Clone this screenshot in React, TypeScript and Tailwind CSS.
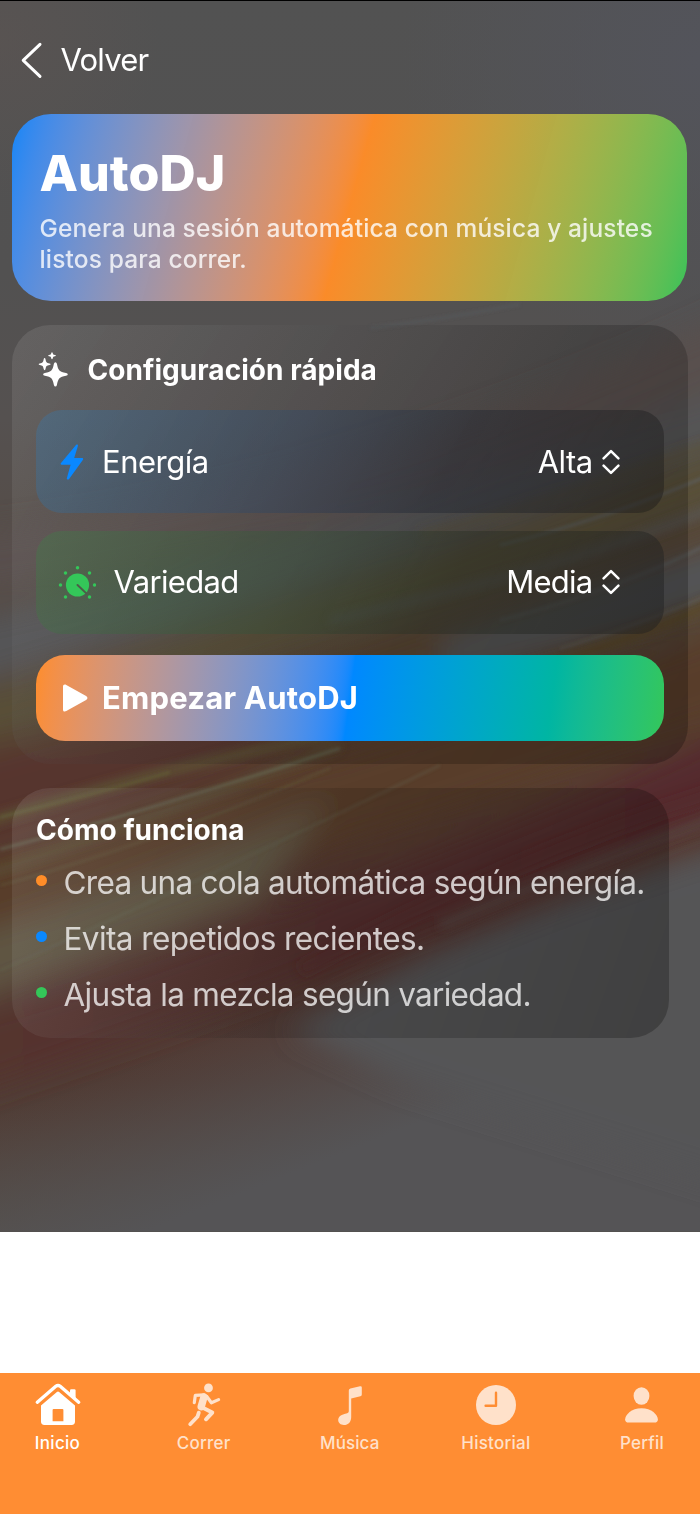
import type { ReactNode } from "react";

function Backdrop() {
  return (
    <svg
      className="absolute inset-0 h-full w-full"
      viewBox="0 0 700 1231"
      preserveAspectRatio="none"
      aria-hidden="true"
    >
      <defs>
        <linearGradient id="base" x1="0" y1="0" x2="0" y2="1">
          <stop offset="0" stopColor="#525252" />
          <stop offset="0.22" stopColor="#525151" />
          <stop offset="0.34" stopColor="#555150" />
          <stop offset="0.5" stopColor="#554a43" />
          <stop offset="0.6" stopColor="#563f30" />
          <stop offset="0.75" stopColor="#543630" />
          <stop offset="0.88" stopColor="#503b34" />
          <stop offset="1" stopColor="#534a43" />
        </linearGradient>
        <linearGradient id="crimson" x1="0" y1="0" x2="1" y2="0">
          <stop offset="0" stopColor="#55352e" />
          <stop offset="0.4" stopColor="#52302d" />
          <stop offset="1" stopColor="#552b2d" />
        </linearGradient>
        <radialGradient id="sky" gradientUnits="userSpaceOnUse" cx="700" cy="60" r="300">
          <stop offset="0" stopColor="#53545b" />
          <stop offset="1" stopColor="#53545b" stopOpacity="0" />
        </radialGradient>
        <radialGradient id="edge" gradientUnits="userSpaceOnUse" cx="0" cy="40" r="160">
          <stop offset="0" stopColor="#5b5452" />
          <stop offset="1" stopColor="#5b5452" stopOpacity="0" />
        </radialGradient>
        <linearGradient id="dusk" gradientUnits="userSpaceOnUse" x1="0" y1="1110" x2="62" y2="1265">
          <stop offset="0" stopColor="#555456" stopOpacity="0" />
          <stop offset="1" stopColor="#555456" />
        </linearGradient>
        <filter id="b14" x="-20%" y="-20%" width="140%" height="140%">
          <feGaussianBlur stdDeviation="14" />
        </filter>
        <filter id="b6" x="-20%" y="-20%" width="140%" height="140%">
          <feGaussianBlur stdDeviation="5" />
        </filter>
        <filter id="b1" x="-20%" y="-20%" width="140%" height="140%">
          <feGaussianBlur stdDeviation="1.5" />
        </filter>
      </defs>
      <rect width="700" height="1231" fill="url(#base)" />
      <rect width="700" height="400" fill="url(#sky)" />
      <rect width="700" height="400" fill="url(#edge)" opacity="0.7" />
      <g filter="url(#b14)">
        <path d="M-80 540Q350 500 780 290V360Q380 540 -80 600Z" fill="#58504d" />
        <path d="M-80 630Q380 530 780 370V420Q380 570 -80 700Z" fill="#555557" />
        <path d="M-80 710Q380 590 780 420V480Q400 630 -80 755Z" fill="#594f38" />
        <path d="M-80 765Q350 660 780 490V610Q400 700 -80 810Z" fill="#574433" />
        <path d="M-80 765Q200 720 340 690L320 740Q150 800 -80 860Z" fill="#56352e" />
        <path d="M440 640L780 525V575Q600 640 440 675Z" fill="#535456" />
        <path d="M-80 870Q350 760 780 610V700Q380 840 -80 970Z" fill="#583e2c" />
        <path d="M-80 1030Q350 900 780 705V790Q380 960 -80 1110Z" fill="url(#crimson)" />
        <path d="M-80 950Q150 880 330 800L260 900Q120 950 -80 1020Z" fill="#5e5443" />
      </g>
      <rect y="820" width="700" height="411" fill="url(#dusk)" />
      <g filter="url(#b14)">
        <path d="M780 830Q560 895 420 960L290 1030L400 1080L780 1200Z" fill="#555456" />
      </g>
      <g filter="url(#b6)" fill="none">
        <path d="M720 817Q560 872 440 925" stroke="#5a5a56" strokeWidth="7" opacity="0.5" />
        <path d="M720 505Q560 570 330 620" stroke="#575759" strokeWidth="7" opacity="0.8" />
        <path d="M720 440Q560 500 420 535" stroke="#5c5438" strokeWidth="12" opacity="0.4" />
        <path d="M-20 824Q150 770 330 735" stroke="#5f5c35" strokeWidth="9" opacity="0.75" />
        <path d="M-20 877Q200 800 340 745" stroke="#5e5b3a" strokeWidth="7" opacity="0.6" />
        <path d="M720 600Q600 655 480 680" stroke="#5a4728" strokeWidth="12" opacity="0.8" />
        <path d="M720 790Q500 860 300 970" stroke="#55282a" strokeWidth="16" opacity="0.35" />
      </g>
      <g filter="url(#b1)" fill="none">
        <path d="M0 849Q150 810 340 748" stroke="#69705a" strokeWidth="2.5" opacity="0.65" />
        <path d="M0 817Q90 795 170 772" stroke="#6a703d" strokeWidth="3" opacity="0.4" />
        <path d="M0 970Q200 880 440 765" stroke="#67715c" strokeWidth="2" opacity="0.35" />
        <path d="M0 885Q150 845 330 768" stroke="#687047" strokeWidth="2" opacity="0.35" />
        <path d="M720 470Q620 515 500 545" stroke="#5d6266" strokeWidth="3.5" opacity="0.6" />
        <path d="M720 538Q620 590 500 620" stroke="#5d6264" strokeWidth="4" opacity="0.5" />
        <path d="M720 590Q640 625 560 648" stroke="#62605a" strokeWidth="3" opacity="0.5" />
        <path d="M370 328Q450 318 520 304" stroke="#5a6062" strokeWidth="4" opacity="0.3" />
      </g>
    </svg>
  );
}

function ChevronUpDown() {
  return (
    <svg
      width="18"
      height="26"
      viewBox="0 0 18 26"
      fill="none"
      stroke="#fff"
      strokeWidth="2.5"
      strokeLinecap="round"
      strokeLinejoin="round"
    >
      <path d="M1.6 9.3L9 2.1L16.4 9.3M1.6 16.7L9 23.9L16.4 16.7" />
    </svg>
  );
}

function DialIcon() {
  const dots = [
    [18, 1.8], [30, 7], [6, 7], [35, 19], [1, 19], [30, 31], [6, 31],
  ];
  return (
    <svg className="mt-[6px]" width="38" height="38" viewBox="-1.5 0 38 38">
      <circle cx="18" cy="19" r="11.6" fill="#34c759" />
      <path d="M18 19L26.8 27.4" stroke="#4d5d49" strokeWidth="2" strokeLinecap="round" />
      {dots.map(([x, y]) => (
        <circle key={`${x}-${y}`} cx={x} cy={y} r="1.75" fill="#34c759" />
      ))}
    </svg>
  );
}

function SettingRow({
  icon,
  label,
  value,
  className,
  labelClass,
  valueClass,
}: {
  icon: ReactNode;
  label: string;
  value: string;
  className: string;
  labelClass: string;
  valueClass: string;
}) {
  return (
    <div className={`flex h-[103px] items-center rounded-[26px] pr-[44px] ${className}`}>
      {icon}
      <span className={`text-[31px] leading-[40px] ${labelClass}`}>{label}</span>
      <span className={`ml-auto mr-[9px] text-[31px] leading-[40px] ${valueClass}`}>{value}</span>
      <ChevronUpDown />
    </div>
  );
}

function Bullet({ dot, text, className }: { dot: string; text: string; className: string }) {
  return (
    <li className="flex h-[56px] items-center">
      <span className={`-mt-[4px] mr-[16.5px] size-[11px] shrink-0 rounded-full ${dot}`} />
      <span className={`whitespace-nowrap pt-px text-[31.5px] leading-[40px] text-white/75 ${className}`}>
        {text}
      </span>
    </li>
  );
}

function Tab({
  label,
  active = false,
  className,
  children,
}: {
  label: string;
  active?: boolean;
  className: string;
  children: ReactNode;
}) {
  return (
    <div className={`flex w-[115px] flex-col items-center ${active ? "text-white" : "text-[#ffe1ca]"}`}>
      <svg width="48" height="48" viewBox="0 0 48 48" fill="currentColor">
        {children}
      </svg>
      <span className={`mt-[3px] whitespace-nowrap text-[17px] font-medium leading-[22px] ${className}`}>
        {label}
      </span>
    </div>
  );
}

export default function App() {
  return (
    <div className="flex h-[1514px] w-[700px] flex-col overflow-hidden bg-white font-['Inter',sans-serif] text-white">
      <main className="relative h-[1231.5px] shrink-0 bg-[#525252]">
        <Backdrop />
        <div className="relative flex flex-col px-[12px]">
          <header className="-mx-[12px] h-[114.4px] border-t border-black pl-[20px] pt-[37px]">
            <div className="flex h-[44px] items-center">
              <svg width="24" height="38" viewBox="0 0 24 38" fill="none">
                <path
                  d="M20 3.3L3.2 19.3L20 35.4"
                  stroke="#fff"
                  strokeWidth="3"
                  strokeLinecap="round"
                  strokeLinejoin="round"
                />
              </svg>
              <span className="ml-[16.5px] text-[31px] leading-[40px] tracking-[-0.8px]">Volver</span>
            </div>
          </header>

          <section className="h-[186.8px] w-[675px] rounded-[39px] bg-[linear-gradient(105.5deg_in_oklab,#0088fff5,#ff8d28f8_50%,#34c759f5)] pl-[27.5px] pt-[29.7px]">
            <h1 className="text-[50px] font-extrabold leading-[58px] tracking-[0.05px]">AutoDJ</h1>
            <p className="mt-[11.4px] whitespace-nowrap text-[24.5px] font-medium leading-[30.5px] text-white/80">
              <span className="block tracking-[0.14px]">
                Genera una sesión automática con música y ajustes
              </span>
              <span className="block tracking-[0.14px]">listos para correr.</span>
            </p>
          </section>

          <section className="mt-[24px] flex h-[439.3px] w-[675.5px] flex-col rounded-[38px] bg-[linear-gradient(123deg,rgba(255,255,255,0.1),rgba(0,0,0,0.16)_60%,rgba(0,0,0,0.24))] px-[24px]">
            <div className="flex h-[85px] items-center pl-[1px] pt-[5px]">
              <svg width="32" height="38" viewBox="37 351 32 38" fill="#fff">
                <path d="M55.4 362.2Q56.5 362.2 56.9 363.8C58.2 370.6 59.4 371.9 66 373.1Q67.8 373.5 67.8 374.4T66 375.7C59.4 376.9 58.2 378.2 56.9 385Q56.5 386.6 55.4 386.6T53.9 385C52.6 378.2 51.4 376.9 44.9 375.7Q43.1 375.3 43.1 374.4T44.9 373.1C51.4 371.9 52.6 370.6 53.9 363.8Q54.3 362.2 55.4 362.2Z" />
                <path d="M44.6 358Q45.3 358 45.5 359.2C46.1 362.3 46.6 362.9 49.5 363.4Q50.6 363.6 50.6 364.2T49.5 365C46.6 365.5 46.1 366.1 45.5 369.1Q45.3 370.2 44.6 370.2T43.7 369.1C43.1 366.1 42.6 365.5 39.8 365Q38.7 364.8 38.7 364.2T39.8 363.4C42.6 362.9 43.1 362.3 43.7 359.2Q43.9 358 44.6 358Z" />
                <path d="M52 352.2Q52.5 352.2 52.7 353C53.1 354.6 53.3 354.8 55 355.1Q55.9 355.3 55.9 355.7T55 356.3C53.3 356.6 53.1 356.8 52.7 358.4Q52.5 359.2 52 359.2T51.3 358.4C50.9 356.8 50.7 356.6 49 356.3Q48.2 356.1 48.2 355.7T49 355.1C50.7 354.8 50.9 354.6 51.3 353Q51.5 352.2 52 352.2Z" />
              </svg>
              <h2 className="ml-[18.5px] text-[28px] font-bold leading-[36px] tracking-[0.05px]">
                Configuración rápida
              </h2>
            </div>

            <SettingRow
              label="Energía"
              value="Alta"
              className="bg-[linear-gradient(118deg,rgba(62,120,165,0.42),rgba(52,72,98,0.48)_40%,rgba(36,40,50,0.48)_65%,rgba(28,26,24,0.45))] pl-[24px]"
              labelClass="ml-[18px] tracking-[-0.5px]"
              valueClass="tracking-[-0.55px]"
              icon={
                <svg width="24" height="36" viewBox="0 0 24 36" fill="#0a88ff">
                  <path d="M16 0.9C17.2 0 18.2 0.8 17.9 2L14.2 14H22C23.2 14 23.5 15 22.8 15.9L9.3 34.7C8.2 36.1 6.3 35.7 6.9 33.9L10.6 20.8H1.7C0.6 20.8 0.3 19.8 1 18.9Z" />
                </svg>
              }
            />

            <SettingRow
              label="Variedad"
              value="Media"
              className="mt-[17.5px] bg-[linear-gradient(118deg,rgba(72,118,76,0.5),rgba(58,80,58,0.5)_40%,rgba(42,46,36,0.48)_65%,rgba(30,30,32,0.45))] pl-[22px]"
              labelClass="ml-[17.5px] tracking-[-0.65px]"
              valueClass="tracking-[-0.75px]"
              icon={<DialIcon />}
            />

            <button className="mt-[21px] flex h-[86px] items-center rounded-[29px] bg-[linear-gradient(97.8deg_in_oklab,#ff8d28,#0088ff_50%,#34c759)] pl-[27px] text-left">
              <svg width="25" height="28" viewBox="0 0 25 28" fill="#fff">
                <path d="M0 2.6C0 0.5 1.6 -0.1 3.3 0.9L23.1 12.1C24.9 13.2 24.9 14.8 23.1 15.9L3.3 27.1C1.6 28.1 0 27.5 0 25.4Z" />
              </svg>
              <span className="ml-[14px] text-[31px] font-bold leading-[40px] tracking-[0.2px]">
                Empezar AutoDJ
              </span>
            </button>
          </section>

          <section className="mt-[24px] h-[249.5px] w-[657px] rounded-[38px] bg-[linear-gradient(110deg,rgba(255,255,255,0.1),rgba(0,0,0,0.12)_45%,rgba(0,0,0,0.25))] px-[24px] pt-[23.3px]">
            <h2 className="text-[28px] font-bold leading-[36px] tracking-[0.03px]">Cómo funciona</h2>
            <ul className="mt-[7px]">
              <Bullet
                dot="bg-[#ff8d28]"
                text="Crea una cola automática según energía."
                className="tracking-[-0.7px]"
              />
              <Bullet dot="bg-[#0a88ff]" text="Evita repetidos recientes." className="tracking-[-0.6px]" />
              <Bullet
                dot="bg-[#34c759]"
                text="Ajusta la mezcla según variedad."
                className="tracking-[-0.7px]"
              />
            </ul>
          </section>
        </div>
      </main>

      <nav className="mt-auto flex h-[141.5px] items-start justify-between bg-[#ff8d33] pr-[0.5px] pt-[8.5px]">
        <Tab label="Inicio" active className="tracking-[0.3px]">
          <path
            d="M3.3 21.2L21.8 5.3Q24 3.5 26.2 5.3L44.7 21.2"
            fill="none"
            stroke="currentColor"
            strokeWidth="3.4"
            strokeLinecap="round"
          />
          <path d="M36 9.4Q36 8.2 37.2 8.2H40.4Q41.6 8.2 41.6 9.4V18.5L36 14Z" />
          <path
            fillRule="evenodd"
            d="M22.9 11Q24 10.1 25.1 11L41 24.6V40.6Q41 44 37.6 44H10.4Q7 44 7 40.6V24.6ZM19.6 28Q18.6 28 18.6 29V40.3H29.4V29Q29.4 28 28.4 28Z"
          />
        </Tab>
        <Tab label="Correr" className="tracking-[0.25px]">
          <circle cx="28.5" cy="6.9" r="4.4" />
          <g fill="none" stroke="currentColor" strokeLinecap="round" strokeLinejoin="round">
            <path d="M14.3 21.6L15.3 14.4L24 13.8" strokeWidth="3.2" />
            <path d="M26.8 15.5L31.4 21.8L38.6 18.6" strokeWidth="3.2" />
            <path d="M24 16L21.2 25.6" strokeWidth="7.4" />
            <path d="M22.4 26.6L32.3 31.6L26 38.3" strokeWidth="3.9" />
            <path d="M18.8 31.6L17.4 35.8L10.2 43.2" strokeWidth="3.8" />
          </g>
        </Tab>
        <Tab label="Música" className="tracking-[0.1px]">
          <path d="M22.8 9.6Q22.8 8 24.4 7.6L34 5.2Q35.8 4.8 35.8 6.6V13.5Q35.8 14.9 34.4 15.3L25.2 17.5V35.9C25.2 40.8 22.3 44 17.8 44C14.6 44 12.2 42.1 12.2 39.1C12.2 35.8 14.6 33.8 18.4 32.9L21.2 32.3Q22.8 31.9 22.8 30.3Z" />
        </Tab>
        <Tab label="Historial" className="tracking-[0.25px]">
          <circle cx="24" cy="24" r="20" />
          <path
            d="M24 11.7V24.8H13.6"
            fill="none"
            stroke="#ff8d33"
            strokeWidth="2.4"
            strokeLinecap="round"
            strokeLinejoin="round"
          />
        </Tab>
        <Tab label="Perfil" className="tracking-[0.2px]">
          <ellipse cx="23.5" cy="15" rx="7.9" ry="8.7" />
          <path d="M23.5 27.2C33.5 27.2 39.9 33.8 39.9 38.4C39.9 40.4 38.7 41.6 36.3 41.6H10.7C8.3 41.6 7.1 40.4 7.1 38.4C7.1 33.8 13.5 27.2 23.5 27.2Z" />
        </Tab>
      </nav>
    </div>
  );
}
